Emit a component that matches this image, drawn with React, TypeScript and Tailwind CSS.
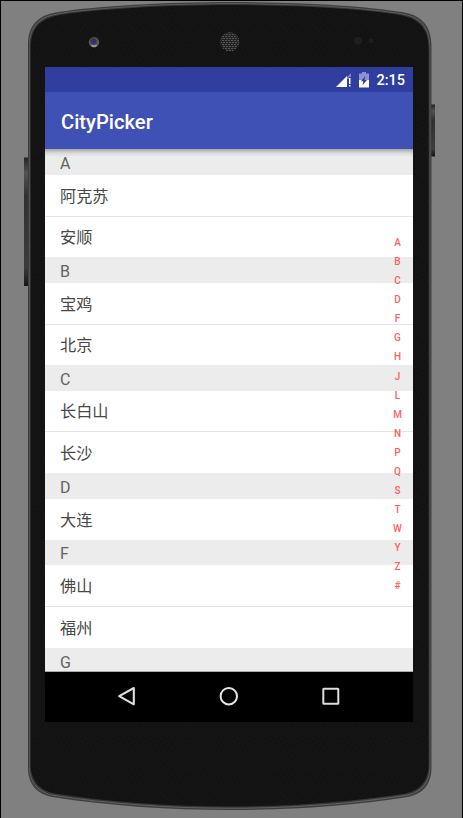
import React from "react";

type Row = { kind: "head" | "city"; text: string; size: string; line?: boolean };

const rows: Row[] = [
  { kind: "head", text: "A", size: "h-[26px]" },
  { kind: "city", text: "阿克苏", size: "h-[42px]", line: true },
  { kind: "city", text: "安顺", size: "h-[40px]" },
  { kind: "head", text: "B", size: "h-[26px]" },
  { kind: "city", text: "宝鸡", size: "h-[42px]", line: true },
  { kind: "city", text: "北京", size: "h-[40px]" },
  { kind: "head", text: "C", size: "h-[26px]" },
  { kind: "city", text: "长白山", size: "h-[41px]", line: true },
  { kind: "city", text: "长沙", size: "h-[41px]" },
  { kind: "head", text: "D", size: "h-[26px]" },
  { kind: "city", text: "大连", size: "h-[41px]" },
  { kind: "head", text: "F", size: "h-[25px]" },
  { kind: "city", text: "佛山", size: "h-[42px]", line: true },
  { kind: "city", text: "福州", size: "h-[41px]" },
  { kind: "head", text: "G", size: "h-[26px]" },
];

const letters = "ABCDFGHJLMNPQSTWYZ#".split("");

function PhoneBody() {
  const outline =
    "M232 2 C300 2 366 6 402 12 C421 15 431 25 431.5 45 L431.5 768 C431.5 784 423 794 408 797 C350 806 290 810 230 810 C170 810 110 806 52 797 C37 794 28 784 28 768 L28 45 C28 25 38 15 58 12 C98 6 164 2 232 2 Z";
  return (
    <svg className="absolute inset-0" width="463" height="818" viewBox="0 0 463 818">
      <defs>
        <pattern id="grain" width="11" height="9" patternUnits="userSpaceOnUse">
          <path d="M1 1h1v1h-1zM6 3h1v1h-1zM3 6h1v1h-1zM9 7h1v1h-1z" fill="#1c1c1c" />
        </pattern>
        <pattern id="mesh" width="3" height="4" patternUnits="userSpaceOnUse">
          <path d="M0 0h2v1h-2zM1 2h2v1h-2z" fill="#555" />
        </pattern>
        <linearGradient id="key" x1="0" x2="0" y1="0" y2="1">
          <stop offset="0" stopColor="#222" />
          <stop offset="0.12" stopColor="#535353" />
          <stop offset="0.3" stopColor="#303030" />
          <stop offset="0.85" stopColor="#3c3c3c" />
          <stop offset="1" stopColor="#151515" />
        </linearGradient>
        <radialGradient id="lens" cx="0.45" cy="0.4">
          <stop offset="0" stopColor="#3838a0" />
          <stop offset="0.4" stopColor="#33333e" />
          <stop offset="0.75" stopColor="#555" />
          <stop offset="1" stopColor="#5b5b5b" />
        </radialGradient>
      </defs>
      <rect x="24" y="157.500" width="4" height="128.500" fill="url(#key)" />
      <rect x="431" y="104.500" width="4" height="52" fill="url(#key)" />
      <path d={outline} fill="#3e3e3e" />
      <path d={outline} fill="#606060" transform="translate(1.200 1.300) scale(.9945 .9968)" />
      <path d={outline} fill="#383838" transform="translate(1.900 2) scale(.9914 .9948)" />
      <path d={outline} fill="#131313" transform="translate(3.100 3.100) scale(.9862 .9918)" />
      <path d={outline} fill="url(#grain)" transform="translate(3.100 3.100) scale(.9862 .9918)" />
      <circle cx="94" cy="42.200" r="5.200" fill="url(#lens)" />
      <path d="M93 40h2v3h-3v-1h1z" fill="#2929a8" />
      <path d="M91 45h6v1h-1v1h-4v-1h-1z" fill="#929292" />
      <circle cx="229.800" cy="41.800" r="9.700" fill="#222" />
      <circle cx="229.800" cy="41.800" r="9.500" fill="url(#mesh)" />
      <circle cx="358" cy="40.700" r="4" fill="#1e1e1e" />
      <circle cx="371" cy="41" r="2.500" fill="#1d1d1d" />
    </svg>
  );
}

function StatusBar() {
  return (
    <div className="flex h-[25px] shrink-0 items-center justify-end bg-[#303f9f] pr-[8px] text-white">
      <svg width="16" height="14" viewBox="0 0 16 14" className="mr-[7px]">
        <path d="M15 0 L11 4 V6 H13 V4 H15 Z" fill="#7782c2" />
        <path d="M0 14 L11 3 V14 Z" fill="#fff" />
        <path d="M13 5h1.500v6H13zM13 12h1.500v1.500H13z" fill="#fff" />
      </svg>
      <svg width="10" height="16" viewBox="0 0 10 16" className="mr-[7px]">
        <path d="M3 0h4v1.500h3V8H0V1.500h3z" fill="#8a94cc" />
        <path d="M0 8h10v7.500H0z" fill="#fff" />
        <path d="M6.300 4 L2 9.200h2.300L3.500 13.300 8 7.900H5.500z" fill="#303f9f" />
      </svg>
      <span className="pt-[3px] text-[14.500px] leading-none font-medium">2:15</span>
    </div>
  );
}

function CityList() {
  return (
    <div className="relative h-[523px] shrink-0 overflow-hidden bg-white">
      {rows.map((r) =>
        r.kind === "head" ? (
          <div key={r.text} className={`${r.size} flex items-center bg-[#ececec] pt-[3px] pl-[15px] text-[16px] text-[#626262]`}>
            {r.text}
          </div>
        ) : (
          <div
            key={r.text}
            className={`${r.size} flex items-center pt-[3px] pl-[15px] text-[16.200px] text-[#484848] ${r.line ? "border-b border-[#e5e5e5]" : ""}`}
          >
            {r.text}
          </div>
        )
      )}
      <div className="absolute inset-x-0 top-0 h-[8px] bg-gradient-to-b from-black/30 via-black/8 to-transparent" />
      <div className="absolute inset-x-0 bottom-0 h-px bg-[#aaa]" />
      <div className="absolute top-[84px] right-[6px] flex w-[19px] flex-col items-center text-[10px] font-medium text-[#ff5f60]">
        {letters.map((l) => (
          <span key={l} className="h-[19.080px] leading-[19px]">
            {l}
          </span>
        ))}
      </div>
    </div>
  );
}

function NavBar() {
  return (
    <div className="flex h-[50px] shrink-0 items-center justify-center gap-[78px] bg-black">
      <svg width="24" height="24" viewBox="0 0 24 24" fill="none" stroke="#dedede" strokeWidth="2.100" strokeLinejoin="round">
        <path d="M18.800 3 V19.300 L4.200 11.200 Z" />
      </svg>
      <svg width="24" height="24" viewBox="0 0 24 24" fill="none" stroke="#e4e4e4" strokeWidth="2">
        <circle cx="11.800" cy="11.200" r="8.200" />
      </svg>
      <svg width="24" height="24" viewBox="0 0 24 24" fill="none" stroke="#dedede" strokeWidth="2" strokeLinejoin="round">
        <rect x="4.300" y="3.700" width="15" height="15" rx="0.500" />
      </svg>
    </div>
  );
}

export default function App() {
  return (
    <div className="relative h-[818px] w-[463px] overflow-hidden border-x border-t border-black bg-[#808080] font-[Roboto,'Noto_Sans_CJK_SC',sans-serif]">
      <div className="absolute -top-px -left-px">
        <PhoneBody />
      </div>
      <div className="relative mt-[66px] ml-[44px] flex h-[655px] w-[368px] flex-col overflow-hidden">
        <StatusBar />
        <div className="flex h-[57px] shrink-0 items-center bg-[#3f51b5] pt-[3px] pl-[16px]">
          <h1 className="text-[20.200px] leading-none font-medium text-white">CityPicker</h1>
        </div>
        <CityList />
        <NavBar />
      </div>
    </div>
  );
}
